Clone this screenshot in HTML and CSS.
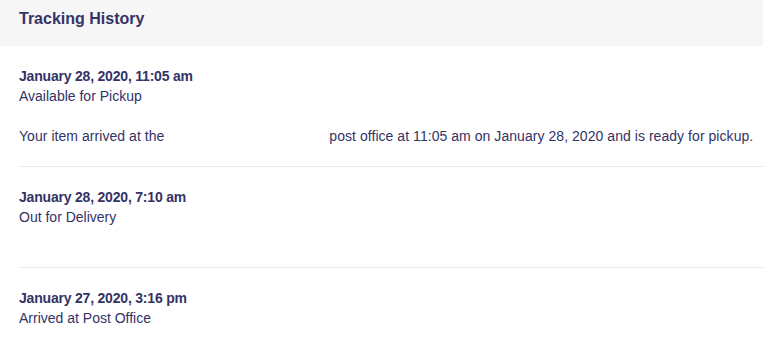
FILE: index.html
```html
<!DOCTYPE html>
<html lang="en">
<head>
  <meta charset="UTF-8" />
  <meta name="viewport" content="width=device-width, initial-scale=1.0"/>
  <title>Tracking History</title>
  <link rel="stylesheet" href="styles.css">
</head>
<body>
  <div class="panel">
    <div class="panel-head">
      <h2>Tracking History</h2>
    </div>

    <div class="history">
      <div class="event">
        <div class="event-date">January 28, 2020, 11:05 am</div>
        <div class="event-status">Available for Pickup</div>
        <p class="event-detail">Your item arrived at the <span class="location"></span> post office at 11:05 am on January 28, 2020 and is ready for pickup.</p>
      </div>

      <div class="event">
        <div class="event-date">January 28, 2020, 7:10 am</div>
        <div class="event-status">Out for Delivery</div>
        <p class="event-detail"></p>
      </div>

      <div class="event">
        <div class="event-date">January 27, 2020, 3:16 pm</div>
        <div class="event-status">Arrived at Post Office</div>
        <p class="event-detail"></p>
      </div>
    </div>
  </div>
</body>
</html>
```

FILE: styles.css
```css
:root {
  --navy: #333366;
  --gris-claro: #f6f6f6;
  --linea: #e8e8e8;
}

body {
  font-family: "Liberation Sans", Arial, sans-serif;
  margin: 0;
  color: var(--navy);
  background: white;
}

.panel-head {
  background: var(--gris-claro);
  height: 46px;
  padding: 0 19px;
  display: flex;
  align-items: center;
}

.panel-head h2 {
  margin: -8px 0 0;
  font-size: 16px;
  font-weight: bold;
  color: var(--navy);
}

.history {
  padding-left: 19px;
}

.event {
  padding: 20px 0;
  border-bottom: 1px solid var(--linea);
  font-size: 14px;
  line-height: 20px;
}

.event:last-child {
  border-bottom: none;
}

.event-date {
  font-weight: bold;
  letter-spacing: -0.2px;
}

.event-detail {
  margin: 20px 0 0;
  letter-spacing: 0.05px;
}

.location {
  display: inline-block;
  width: 157px;
}
```
